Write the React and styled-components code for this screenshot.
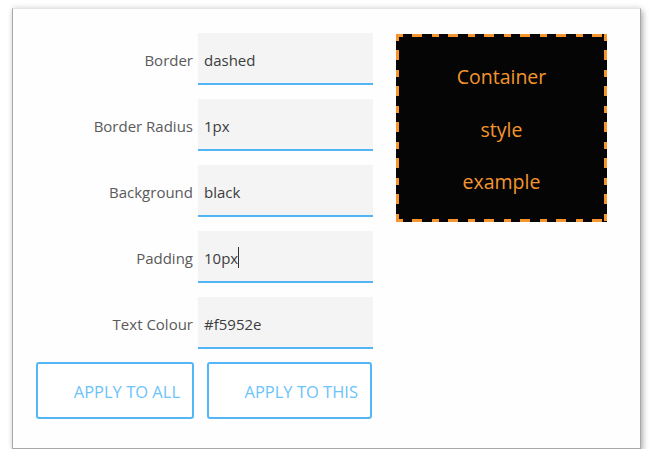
import React from "react";
import styled, { createGlobalStyle } from "styled-components";

const Global = createGlobalStyle`
  html, body { margin: 0; padding: 0; background: #ffffff; }
  body { font-family: "Open Sans", "Noto Sans", sans-serif; }
  * { box-sizing: border-box; }
`;

const Frame = styled.div`
  margin: 8px 0 0 12px;
  width: 629px;
  height: 441px;
  background: #fefefe;
  border: 1px solid #a8a8a8;
  border-top-color: #e4e4e4;
  box-shadow: 2px 3px 6px rgba(0, 0, 0, 0.3), 0 -2px 5px rgba(0, 0, 0, 0.06);
  display: flex;
  align-items: flex-start;
  padding: 24px 0 0 23px;
  gap: 23px;
`;

const Form = styled.div`
  display: flex;
  flex-direction: column;
  width: 337px;
`;

const Rows = styled.div`
  display: flex;
  flex-direction: column;
  gap: 14px;
`;

const Row = styled.div`
  display: flex;
  align-items: center;
  gap: 5px;
`;

const Label = styled.label`
  width: 157px;
  text-align: right;
  font-size: 15px;
  color: #5a5a5a;
  padding-top: 1px;
  white-space: nowrap;
`;

const Field = styled.div`
  width: 175px;
  height: 52px;
  background: #f4f4f4;
  border-bottom: 2px solid #52b5f6;
  display: flex;
  align-items: center;
  padding: 3px 6px 0;
  font-size: 15px;
  color: #3c3c3c;
`;

const Caret = styled.span`
  display: inline-block;
  width: 1px;
  height: 21px;
  background: #333;
`;

const Buttons = styled.div`
  display: flex;
  gap: 13px;
  margin-top: 13px;
`;

const Button = styled.button`
  width: ${(p) => p.$w}px;
  height: 57px;
  background: #fff;
  border: 2px solid #55b6f7;
  border-radius: 3px;
  display: flex;
  align-items: center;
  justify-content: flex-end;
  padding: 1px 12px 0 0;
  font-family: "Open Sans", "Noto Sans", sans-serif;
  font-size: 16.5px;
  color: #6cc3fa;
  cursor: pointer;
`;

const dash = "#f5952e";

const Preview = styled.div`
  margin-top: 1px;
  width: 211px;
  height: 188px;
  background-color: #050505;
  background-image:
    repeating-linear-gradient(90deg, ${dash} 0 7px, transparent 7px 16px, ${dash} 16px 26px, transparent 26px 36px),
    repeating-linear-gradient(90deg, ${dash} 0 7px, transparent 7px 16px, ${dash} 16px 26px, transparent 26px 36px),
    repeating-linear-gradient(180deg, ${dash} 0 7px, transparent 7px 16px, ${dash} 16px 26px, transparent 26px 36px),
    repeating-linear-gradient(180deg, ${dash} 0 7px, transparent 7px 16px, ${dash} 16px 26px, transparent 26px 36px);
  background-size: 100% 3px, 100% 3px, 3px 100%, 3px 100%;
  background-position: 0 0, 0 100%, 0 0, 100% 0;
  background-repeat: no-repeat;
  padding: 17px 13px 13px;
  color: #f5952e;
  font-size: 19.5px;
  text-align: center;
`;

const PreviewLine = styled.div`
  line-height: 52.5px;
`;

const fields = [
  ["Border", "dashed"],
  ["Border Radius", "1px"],
  ["Background", "black"],
  ["Padding", "10px", true],
  ["Text Colour", "#f5952e"],
];

export default function App() {
  return (
    <>
      <Global />
      <Frame>
        <Form>
          <Rows>
            {fields.map(([label, value, caret]) => (
              <Row key={label}>
                <Label>{label}</Label>
                <Field>
                  {value}
                  {caret && <Caret />}
                </Field>
              </Row>
            ))}
          </Rows>
          <Buttons>
            <Button $w={158}>APPLY TO ALL</Button>
            <Button $w={165}>APPLY TO THIS</Button>
          </Buttons>
        </Form>
        <Preview>
          <PreviewLine>Container</PreviewLine>
          <PreviewLine>style</PreviewLine>
          <PreviewLine>example</PreviewLine>
        </Preview>
      </Frame>
    </>
  );
}
